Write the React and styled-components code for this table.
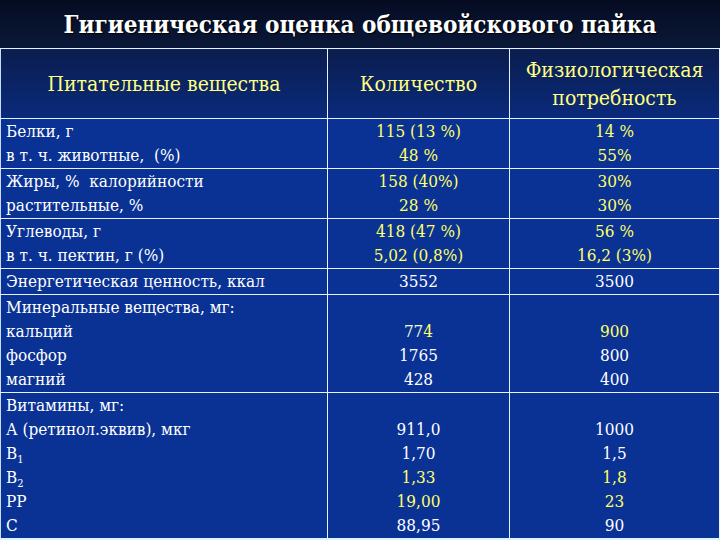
import React from "react";
import styled, { createGlobalStyle } from "styled-components";

const rows = [
	{
		name: ["Белки, г", "в т. ч. животные,  (%)"],
		qty: ["115 (13 %)", "48 %"],
		need: ["14 %", "55%"],
		tone: "yellow",
	},
	{
		name: ["Жиры, %  калорийности", "растительные, %"],
		qty: ["158 (40%)", "28 %"],
		need: ["30%", "30%"],
		tone: "yellow",
	},
	{
		name: ["Углеводы, г", "в т. ч. пектин, г (%)"],
		qty: ["418 (47 %)", "5,02 (0,8%)"],
		need: ["56 %", "16,2 (3%)"],
		tone: "yellow",
	},
	{
		name: ["Энергетическая ценность, ккал"],
		qty: ["3552"],
		need: ["3500"],
		tone: "white",
	},
	{
		name: ["Минеральные вещества, мг:", "кальций", "фосфор", "магний"],
		qty: ["", "774", "1765", "428"],
		need: ["", "900", "800", "400"],
		yellowLines: [1],
		tone: "white",
	},
	{
		name: ["Витамины, мг:", "А (ретинол.эквив), мкг", "B1", "B2", "PP", "C"],
		qty: ["", "911,0", "1,70", "1,33", "19,00", "88,95"],
		need: ["", "1000", "1,5", "1,8", "23", "90"],
		yellowLines: [3, 4],
		tone: "white",
	},
];

function renderName(text) {
	if (text === "B1" || text === "B2") {
		return (
			<>
				B<Sub>{text[1]}</Sub>
			</>
		);
	}
	return text;
}

function renderValue(text) {
	if (text === "774") {
		return (
			<>
				<Pale>77</Pale>4
			</>
		);
	}
	return text || "\u00a0";
}

function App() {
	return (
		<>
			<GlobalStyle />
			<Slide>
				<Title>Гигиеническая оценка общевойскового пайка</Title>
				<Table>
					<colgroup>
						<col style={{ width: "327px" }} />
						<col style={{ width: "182px" }} />
						<col />
					</colgroup>
					<thead>
						<tr>
							<HeadCell>Питательные вещества</HeadCell>
							<HeadCell>Количество</HeadCell>
							<HeadCell>
								Физиологическая
								<br />
								потребность
							</HeadCell>
						</tr>
					</thead>
					<tbody>
						{rows.map((row, i) => (
							<tr key={i}>
								<NameCell>
									{row.name.map((line, j) => (
										<Line key={j}>{renderName(line)}</Line>
									))}
								</NameCell>
								{[row.qty, row.need].map((col, k) => (
									<ValueCell key={k}>
										{col.map((v, j) => {
											const yellow =
												row.tone === "yellow" ||
												(row.yellowLines || []).includes(j);
											return (
												<Line key={j} $yellow={yellow}>
													{renderValue(v)}
												</Line>
											);
										})}
									</ValueCell>
								))}
							</tr>
						))}
					</tbody>
				</Table>
			</Slide>
		</>
	);
}

export default App;

const serif = `"DejaVu Serif Condensed", "DejaVu Serif", serif`;

const GlobalStyle = createGlobalStyle`
	html, body {
		margin: 0;
		padding: 0;
		background: #081433;
	}
`;

const Slide = styled.div`
	width: 720px;
	height: 540px;
	overflow: hidden;
	display: flex;
	flex-direction: column;
	background: #0a3294;
`;

const Title = styled.h1`
	margin: 0;
	flex-shrink: 0;
	height: 48px;
	display: flex;
	align-items: center;
	justify-content: center;
	font-family: ${serif};
	font-stretch: condensed;
	font-size: 24px;
	font-weight: bold;
	color: #ffffff;
	background: linear-gradient(180deg, #050c22 0%, #0a1838 100%);
	text-shadow: 1px 1px 1px #000;
`;

const Table = styled.table`
	flex-shrink: 0;
	width: 720px;
	border-collapse: collapse;
	table-layout: fixed;
	border-top: 1px solid #e6f2ff;
	border-left: 1px solid #c9dcf5;
	border-bottom: 2px solid #d8f4ff;
	background: #0a3294;
`;

const HeadCell = styled.th`
	height: 69px;
	padding: 0;
	font-family: ${serif};
	font-stretch: condensed;
	font-weight: normal;
	font-size: 21px;
	line-height: 28px;
	color: #ffff80;
	text-align: center;
	vertical-align: middle;
	background: linear-gradient(180deg, #0b1d4e 0%, #0a2a7c 100%);
	border-right: 1px solid #e6f2ff;
	border-bottom: 1px solid #e6f2ff;
`;

const NameCell = styled.td`
	padding: 0 0 1px 5px;
	vertical-align: top;
	font-family: ${serif};
	font-stretch: condensed;
	font-size: 17px;
	color: #ffffff;
	border-right: 1px solid #e6f2ff;
	border-bottom: 1px solid #e6f2ff;
	white-space: pre;
`;

const ValueCell = styled.td`
	padding: 0 0 1px;
	vertical-align: top;
	text-align: center;
	font-family: ${serif};
	font-stretch: condensed;
	font-size: 17px;
	border-right: 1px solid #e6f2ff;
	border-bottom: 1px solid #e6f2ff;
`;

const Line = styled.div`
	height: 24px;
	line-height: 24px;
	color: ${(p) => (p.$yellow ? "#ffff66" : "#ffffff")};
`;

const Sub = styled.sub`
	font-size: 11px;
	line-height: 0;
	vertical-align: -4px;
`;

const Pale = styled.span`
	color: #e8ffd8;
`;
